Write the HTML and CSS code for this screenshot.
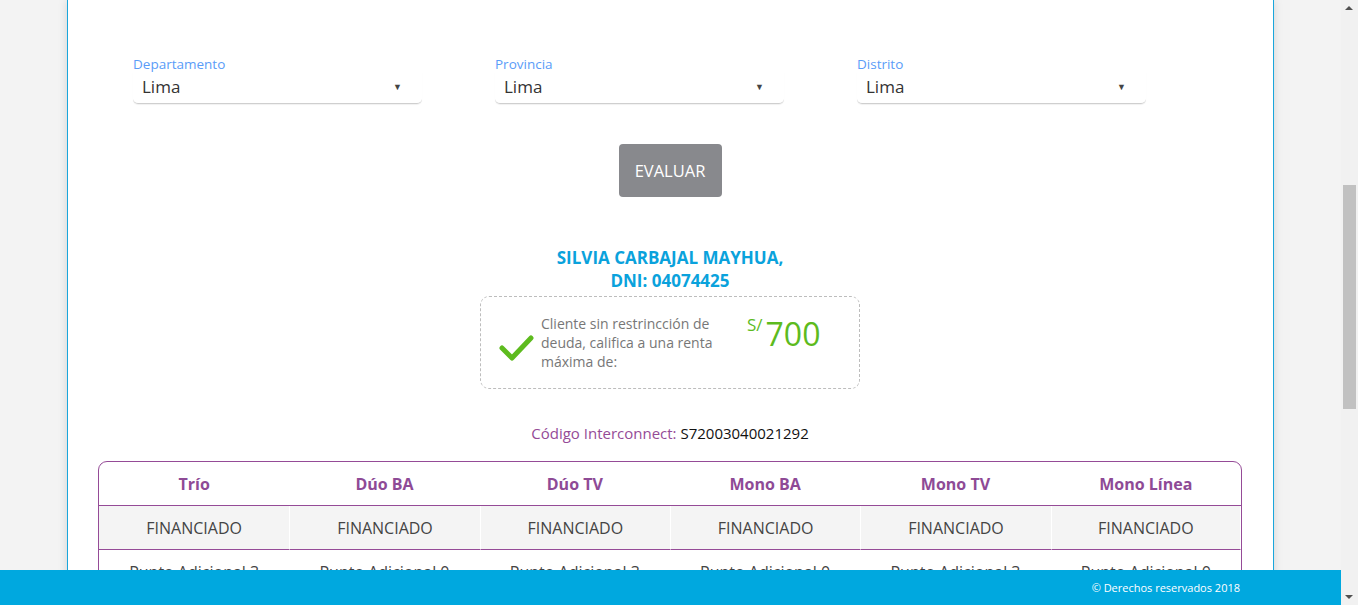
FILE: index.html
```html
<!DOCTYPE html>
<html lang="es">
<head>
<meta charset="utf-8">
<title>Evaluación</title>
<link rel="stylesheet" href="styles.css">
</head>
<body>
<div class="page">
  <main class="card">
    <div class="selects">
      <div class="field">
        <label class="field-label">Departamento</label>
        <div class="select"><span>Lima</span><span class="caret">▼</span></div>
      </div>
      <div class="field">
        <label class="field-label">Provincia</label>
        <div class="select"><span>Lima</span><span class="caret">▼</span></div>
      </div>
      <div class="field">
        <label class="field-label">Distrito</label>
        <div class="select"><span>Lima</span><span class="caret">▼</span></div>
      </div>
    </div>

    <div class="actions">
      <button class="btn-evaluar">EVALUAR</button>
    </div>

    <h2 class="client-name">SILVIA CARBAJAL MAYHUA,<br>DNI: 04074425</h2>

    <div class="result-box">
      <svg class="check" width="36" height="30" viewBox="0 0 36 30">
        <polyline points="3,15 13,25 32,5" fill="none" stroke="#5dbb1e" stroke-width="5" stroke-linecap="round" stroke-linejoin="round"/>
      </svg>
      <p class="result-text">Cliente sin restrincción de deuda, califica a una renta máxima de:</p>
      <div class="price"><span class="currency">S/</span><span class="amount">700</span></div>
    </div>

    <p class="code">Código Interconnect: <span class="code-value">S72003040021292</span></p>

    <table class="plans">
      <thead>
        <tr>
          <th>Trío</th><th>Dúo BA</th><th>Dúo TV</th><th>Mono BA</th><th>Mono TV</th><th>Mono Línea</th>
        </tr>
      </thead>
      <tbody>
        <tr class="row-grey">
          <td>FINANCIADO</td><td>FINANCIADO</td><td>FINANCIADO</td><td>FINANCIADO</td><td>FINANCIADO</td><td>FINANCIADO</td>
        </tr>
        <tr>
          <td>Punto Adicional 3</td><td>Punto Adicional 0</td><td>Punto Adicional 3</td><td>Punto Adicional 0</td><td>Punto Adicional 3</td><td>Punto Adicional 0</td>
        </tr>
        <tr>
          <td>&nbsp;</td><td>&nbsp;</td><td>&nbsp;</td><td>&nbsp;</td><td>&nbsp;</td><td>&nbsp;</td>
        </tr>
      </tbody>
    </table>
  </main>
</div>

<footer class="footer">© Derechos reservados 2018</footer>

<div class="scrollbar">
  <span class="arrow arrow-up"></span>
  <span class="thumb"></span>
  <span class="arrow arrow-down"></span>
</div>
</body>
</html>
```

FILE: styles.css
```css
html, body {
  margin: 0;
  padding: 0;
  height: 100%;
  overflow: hidden;
}

body {
  background: #f3f3f3;
  font-family: "Open Sans", "Noto Sans", sans-serif;
  color: #444;
}

.page {
  width: 1341px;
  display: flex;
}

.card {
  margin-left: 67px;
  width: 1144px;
  padding: 56px 31px 200px 30px;
  background: #fff;
  border-left: 1px solid #1aa6dc;
  border-right: 1px solid #1aa6dc;
  box-shadow: 0 0 9px rgba(0, 0, 0, 0.13);
  min-height: 700px;
}

/* selects */
.selects {
  display: flex;
  gap: 73px;
  padding-left: 35px;
}

.field {
  width: 289px;
  display: flex;
  flex-direction: column;
}

.field-label {
  font-size: 13.5px;
  line-height: 16px;
  color: #5a9cf8;
}

.select {
  box-sizing: border-box;
  height: 32px;
  display: flex;
  align-items: center;
  justify-content: space-between;
  padding: 0 20px 3px 9px;
  font-size: 17px;
  color: #333;
  border-bottom: 1px solid #cfcfcf;
  border-radius: 0 0 5px 5px;
  box-shadow: 0 1px 1px rgba(0, 0, 0, 0.06);
}

.caret {
  font-size: 9px;
  color: #444;
}

/* button */
.actions {
  display: flex;
  justify-content: center;
  margin-top: 40px;
}

.btn-evaluar {
  width: 103px;
  height: 53px;
  border: none;
  border-radius: 4px;
  background: #88898d;
  color: #fff;
  font-family: inherit;
  font-size: 16.5px;
  font-weight: 500;
  padding: 0;
}

/* client */
.client-name {
  margin: 49px 0 0;
  text-align: center;
  font-size: 17px;
  line-height: 23px;
  font-weight: 700;
  color: #0aa2dc;
}

.result-box {
  margin: 4px auto 0;
  width: 378px;
  height: 91px;
  border: 1px dashed #bdbdbd;
  border-radius: 9px;
  display: flex;
  align-items: center;
  box-sizing: content-box;
}

.check {
  margin-left: 18px;
  margin-top: 10px;
  flex: none;
}

.result-text {
  margin: 0 0 0 6px;
  width: 176px;
  font-size: 14px;
  line-height: 19px;
  color: #777;
}

.price {
  margin-left: 30px;
  margin-top: -18px;
  display: flex;
  align-items: flex-start;
  color: #5dbb1e;
}

.currency {
  font-size: 17px;
  line-height: 20px;
  margin-right: 3px;
}

.amount {
  font-size: 32px;
  line-height: 38px;
}

/* code */
.code {
  margin: 34px 0 0;
  text-align: center;
  font-size: 15px;
  line-height: 20px;
  color: #954b97;
}

.code-value {
  color: #111;
}

/* table */
.plans {
  margin-top: 18px;
  width: 1144px;
  border-collapse: separate;
  border-spacing: 0;
  border: 1px solid #954b97;
  border-radius: 9px 9px 0 0;
  table-layout: fixed;
}

.plans th {
  height: 43px;
  font-size: 16px;
  font-weight: 700;
  color: #8e4a96;
  border-bottom: 1px solid #954b97;
  padding: 0;
}

.plans td {
  height: 43px;
  text-align: center;
  font-size: 16px;
  color: #444;
  border-bottom: 1px solid #954b97;
  padding: 0;
}

.row-grey td {
  background: #f4f4f4;
  border-left: 1px solid #fff;
}

.row-grey td:first-child {
  border-left: none;
}

.row-grey td:last-child {
  border-right: 1px solid #fff;
}

/* footer */
.footer {
  position: fixed;
  left: 0;
  bottom: 0;
  width: 1240px;
  height: 35px;
  padding-right: 101px;
  background: #00a8df;
  color: #fff;
  font-size: 11px;
  line-height: 35px;
  text-align: right;
}

/* fake scrollbar */
.scrollbar {
  position: fixed;
  top: 0;
  right: 0;
  width: 17px;
  height: 605px;
  background: #f1f1f1;
}

.thumb {
  position: absolute;
  left: 2px;
  top: 185px;
  width: 13px;
  height: 224px;
  background: #c1c1c1;
}

.arrow {
  position: absolute;
  left: 4px;
  width: 0;
  height: 0;
  border-left: 4px solid transparent;
  border-right: 4px solid transparent;
}

.arrow-up {
  top: 6px;
  border-bottom: 4px solid #505050;
}

.arrow-down {
  bottom: 6px;
  border-top: 4px solid #505050;
}
```
